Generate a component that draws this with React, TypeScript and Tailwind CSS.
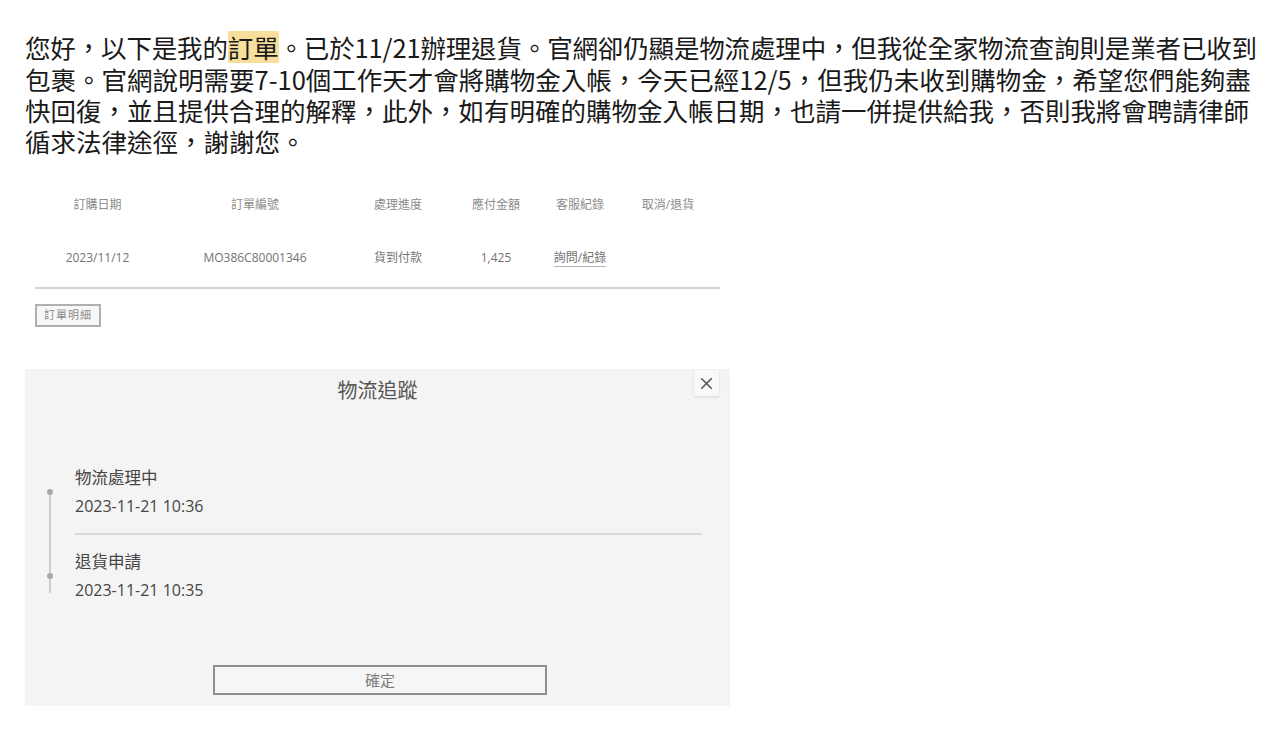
import { X } from 'lucide-react';

const cjk = "font-['Noto_Sans_CJK_TC','Noto_Sans',sans-serif]";
const site = "font-['Open_Sans','Noto_Sans_CJK_TC',sans-serif]";

const lines = [
  '包裹。官網說明需要7-10個工作天才會將購物金入帳，今天已經12/5，但我仍未收到購物金，希望您們能夠盡',
  '快回復，並且提供合理的解釋，此外，如有明確的購物金入帳日期，也請一併提供給我，否則我將會聘請律師',
  '循求法律途徑，謝謝您。',
];

const cols = ['w-[125px]', 'w-[190px]', 'w-[96px]', 'w-[100px]', 'w-[68px]', 'w-[108px]'];
const head = ['訂購日期', '訂單編號', '處理進度', '應付金額', '客服紀錄', '取消/退貨'];

const events = [
  { title: '物流處理中', time: '2023-11-21 10:36' },
  { title: '退貨申請', time: '2023-11-21 10:35' },
];

export default function App() {
  return (
    <div className="min-h-screen bg-white">
      {/* 貼文內文 */}
      <div className={`${cjk} pl-[25px] pt-[31px] text-[25.5px] leading-[31px] text-[#1a1a1a]`}>
        <div className="whitespace-nowrap tracking-[-0.15px]">
          您好，以下是我的
          <span className="inline-block bg-[#f8df9b] leading-[32px]">訂單</span>
          。已於11/21辦理退貨。官網卻仍顯是物流處理中，但我從全家物流查詢則是業者已收到
        </div>
        {lines.map((l) => (
          <div key={l} className="whitespace-nowrap">
            {l}
          </div>
        ))}
      </div>

      {/* 訂單列表截圖 */}
      <div className={`${site} ml-[35px] mt-[34px] w-[687px] text-[12px]`}>
        <div className="flex h-[30px] items-center text-[#8c8c8c]">
          {head.map((h, i) => (
            <div key={h} className={`${cols[i]} text-center`}>
              {h}
            </div>
          ))}
        </div>
        <div className="mt-[23px] flex h-[30px] items-center text-[#737373]">
          <div className={`${cols[0]} text-center`}>2023/11/12</div>
          <div className={`${cols[1]} text-center`}>MO386C80001346</div>
          <div className={`${cols[2]} text-center`}>貨到付款</div>
          <div className={`${cols[3]} text-center`}>1,425</div>
          <div className={`${cols[4]} text-center`}>
            <span className="border-b border-[#b5b5b5]">詢問/紀錄</span>
          </div>
          <div className={cols[5]} />
        </div>
        <div className="mt-[14px] h-[2px] w-[685px] bg-[#d2d2d2]" />
        <button className="mt-[15px] flex h-[23px] w-[66px] items-center justify-center border-2 border-[#b0b0b0] bg-[#f7f7f7] text-[11px] tracking-[1px] text-[#8a8a8a]">
          訂單明細
        </button>
      </div>

      {/* 物流追蹤視窗 */}
      <div className={`${site} relative ml-[25px] mt-[42px] w-[705px] bg-[#f4f4f4] pb-[11px]`}>
        <div className="flex h-[44px] items-center justify-center text-[20px] text-[#555]">物流追蹤</div>
        <button className="absolute right-[11px] top-[1px] flex h-[26px] w-[25px] items-center justify-center bg-[#f8f8f8] shadow-[0_1px_2px_rgba(0,0,0,0.12)]">
          <X size={19} strokeWidth={2} className="text-[#555]" />
        </button>

        <div className="relative ml-[24px] mr-[28px] mt-[54px] pl-[26px]">
          <div className="absolute left-0 top-[22px] h-[104px] w-[2px] bg-[#cfcfcf]" />
          <div className="absolute left-[-2px] top-[22px] h-[6px] w-[6px] rounded-full bg-[#a8a8a8]" />
          <div className="absolute left-[-2px] top-[106px] h-[6px] w-[6px] rounded-full bg-[#a8a8a8]" />
          {events.map((e, i) => (
            <div key={e.time}>
              {i > 0 && <div className="mb-[16px] mt-[16px] h-[2px] bg-[#d9d9d9]" />}
              <div className="text-[16.5px] leading-[22px] text-[#454545]">{e.title}</div>
              <div className="mt-[6px] text-[16px] leading-[22px] text-[#454545]">{e.time}</div>
            </div>
          ))}
        </div>

        <div className="mt-[64px] flex justify-center">
          <button className="ml-[5px] flex h-[30px] w-[334px] items-center justify-center border-2 border-[#8e8e8e] bg-[#f6f6f6] text-[15px] text-[#7c7c7c]">
            確定
          </button>
        </div>
      </div>
    </div>
  );
}
